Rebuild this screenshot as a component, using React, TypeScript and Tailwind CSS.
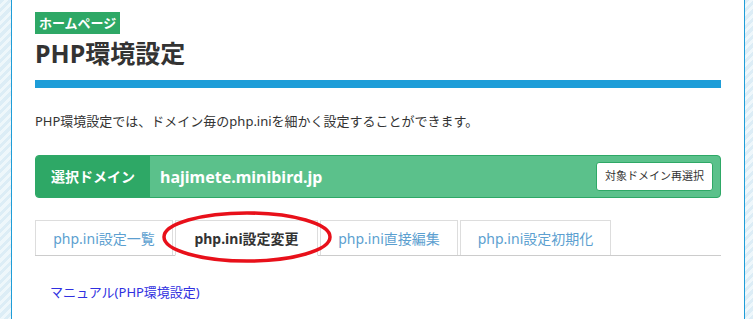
export default function App() {
  const tabs = [
    { label: "php.ini設定一覧", active: false, w: "w-[138px]" },
    { label: "php.ini設定変更", active: true, w: "w-[143px]" },
    { label: "php.ini直接編集", active: false, w: "w-[138px]" },
    { label: "php.ini設定初期化", active: false, w: "w-[151px]" },
  ];

  const stripe =
    "bg-[repeating-linear-gradient(135deg,#dcedf6_0px,#dcedf6_3px,#eef7fb_3px,#eef7fb_6px)]";

  return (
    <div className="flex h-[319px] w-[753px] overflow-hidden bg-white font-['Noto_Sans','Noto_Sans_CJK_JP',sans-serif] text-[#333]">
      <div className={`w-[11px] shrink-0 ${stripe}`} />
      <main className="relative w-[734px] shrink-0 border-x border-[#1e9dd8] bg-white px-[23px] pt-[10px]">
        <span className="inline-block h-[22px] bg-[#2ea866] px-[4px] text-[13px] font-bold leading-[22px] text-white">
          ホームページ
        </span>
        <h1 className="mt-[3px] text-[25px] font-bold leading-[32px] text-[#333]">PHP環境設定</h1>
        <div className="mt-[11px] h-[8px] bg-[#1e9dd8]" />

        <p className="mt-[23px] text-[13px] leading-[20px]">
          PHP環境設定では、ドメイン毎のphp.iniを細かく設定することができます。
        </p>

        <div className="mt-[24px] flex h-[43px] overflow-hidden rounded-[4px] border border-[#2ea866] bg-[#5bc18b]">
          <div className="flex w-[114px] items-center justify-center bg-[#2ea866] text-[14px] font-bold text-white">
            選択ドメイン
          </div>
          <div className="flex flex-1 items-center pl-[10px] text-[16px] font-bold text-white">
            hajimete.minibird.jp
          </div>
          <div className="flex items-center pr-[7px]">
            <button className="h-[29px] rounded-[3px] border border-[#2ea866] bg-white px-[8px] text-[11px] text-[#333]">
              対象ドメイン再選択
            </button>
          </div>
        </div>

        <div className="mt-[22px] flex gap-[2px] border-b border-[#ccc]">
          {tabs.map((tab) => (
            <div
              key={tab.label}
              className={
                tab.active
                  ? `${tab.w} -mb-px flex h-[36px] items-center justify-center border border-b-white border-[#ddd] bg-white text-[14px] font-bold text-[#333]`
                  : `${tab.w} flex h-[35px] items-center justify-center border border-b-0 border-[#ddd] text-[14px] text-[#5c9fd0]`
              }
            >
              {tab.label}
            </div>
          ))}
        </div>

        <a href="#" className="mt-[26px] ml-[15px] block text-[13px] leading-[20px] text-[#3030e0]">
          マニュアル(PHP環境設定)
        </a>

        <svg
          className="pointer-events-none absolute left-[149px] top-[210px]"
          width="172"
          height="54"
          viewBox="0 0 172 54"
        >
          <ellipse cx="86" cy="27" rx="83" ry="24" fill="none" stroke="#e8101a" strokeWidth="3.5" />
        </svg>
      </main>
      <div className={`flex-1 ${stripe}`} />
    </div>
  );
}
